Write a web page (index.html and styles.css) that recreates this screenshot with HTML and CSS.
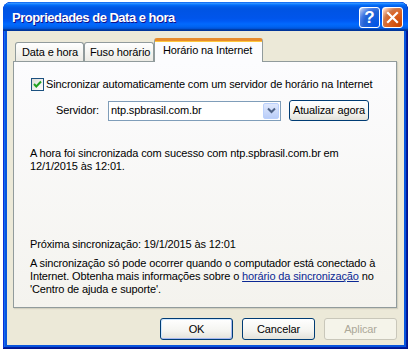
FILE: index.html
```html
<!DOCTYPE html>
<html lang="pt-BR">
<head>
<meta charset="utf-8">
<title>Propriedades de Data e hora</title>
<link rel="stylesheet" href="styles.css">
</head>
<body>
<div class="window">
  <div class="titlebar">
    <span class="title">Propriedades de Data e hora</span>
    <div class="controls">
      <span class="ctl help">?</span>
      <span class="ctl close">
        <svg width="13" height="13" viewBox="0 0 13 13"><path d="M2 2 L11 11 M11 2 L2 11" stroke="#fff" stroke-width="2.2" stroke-linecap="square"/></svg>
      </span>
    </div>
  </div>
  <div class="frame">
    <div class="tabs">
      <span class="tab t1">Data e hora</span>
      <span class="tab t2">Fuso horário</span>
      <span class="tab active">Horário na Internet</span>
    </div>
    <div class="panel">
      <div class="check-row">
        <span class="checkbox">
          <svg width="11" height="11" viewBox="0 0 11 11"><path d="M2 5 L4.3 7.5 L9 2.5" fill="none" stroke="#21a121" stroke-width="2"/></svg>
        </span>
        <span>Sincronizar automaticamente com um servidor de horário na Internet</span>
      </div>
      <div class="server-row">
        <span class="label">Servidor:</span>
        <div class="combo">
          <span class="combo-text">ntp.spbrasil.com.br</span>
          <span class="drop">
            <svg width="9" height="7" viewBox="0 0 9 7"><path d="M1 1.5 L4.5 5 L8 1.5" fill="none" stroke="#4d6185" stroke-width="2"/></svg>
          </span>
        </div>
        <span class="btn update">Atualizar agora</span>
      </div>
      <p class="msg">A hora foi sincronizada com sucesso com ntp.spbrasil.com.br em<br>12/1/2015 às 12:01.</p>
      <p class="next">Próxima sincronização: 19/1/2015 às 12:01</p>
      <p class="note">A sincronização só pode ocorrer quando o computador está conectado à<br>Internet. Obtenha mais informações sobre o <span class="link">horário da sincronização</span> no<br>'Centro de ajuda e suporte'.</p>
    </div>
    <div class="buttons">
      <span class="btn dlg default">OK</span>
      <span class="btn dlg">Cancelar</span>
      <span class="btn dlg disabled">Aplicar</span>
    </div>
  </div>
</div>
</body>
</html>
```
FILE: styles.css
```css
html, body {
  margin: 0;
  padding: 0;
  background: #ffffff;
}
body {
  width: 408px;
  height: 352px;
  overflow: hidden;
  font-family: "Liberation Sans", Arial, sans-serif;
  font-size: 11px;
  letter-spacing: -0.13px;
  color: #000;
}
.window {
  margin: 2px 0 0 3px;
  width: 405px;
  height: 347px;
  border-radius: 8px 8px 0 0;
  background: #0855dd;
  box-shadow: inset -1px -1px #00138c, inset 1px 1px #0831d9, inset -2px -2px #001ea0, inset 2px 2px #166aee;
  display: flex;
  flex-direction: column;
  overflow: hidden;
}
.titlebar {
  height: 29px;
  flex: none;
  display: flex;
  align-items: center;
  justify-content: space-between;
  padding: 0 5px 0 9px;
  border-radius: 8px 8px 0 0;
  background: linear-gradient(180deg, #0058ee 0%, #3593ff 4%, #288eff 6%, #127dff 8%, #036ffc 10%, #0262ee 14%, #0057e5 20%, #0054e3 24%, #0055eb 56%, #005bf5 66%, #026afe 76%, #0062ef 86%, #0052d6 92%, #0040ab 94%, #003092 100%);
}
.title {
  color: #fff;
  font-weight: bold;
  font-size: 13px;
  letter-spacing: -0.5px;
  text-shadow: 1px 1px #0f1089;
  margin-top: 1px;
}
.controls {
  display: flex;
  gap: 2px;
  margin-top: 2px;
}
.ctl {
  width: 19px;
  height: 19px;
  border: 1px solid #fff;
  border-radius: 3px;
  display: flex;
  align-items: center;
  justify-content: center;
  color: #fff;
  letter-spacing: 0;
}
.help {
  font-weight: bold;
  font-size: 17px;
  background: radial-gradient(circle at 90% 90%, #0054e9 0%, #2263d5 55%, #4479e4 70%, #a3bbec 90%, #fff 100%);
}
.close {
  background: radial-gradient(circle at 90% 90%, #cc4600 0%, #dc6527 55%, #cd7546 68%, #ffccb2 90%, #fff 100%);
}
.frame {
  flex: 1;
  margin: 0 4px 4px 4px;
  background: #ece9d8;
  padding: 7px 7px 0 6px;
  display: flex;
  flex-direction: column;
}
.tabs {
  height: 23px;
  display: flex;
  align-items: flex-end;
  padding-left: 2px;
  position: relative;
  z-index: 1;
}
.tab {
  box-sizing: border-box;
  height: 19px;
  border: 1px solid #919b9c;
  border-bottom: none;
  border-radius: 3px 3px 0 0;
  background: linear-gradient(180deg, #fff 0%, #f7f7f4 40%, #ecebe5 100%);
  line-height: 18px;
  padding-left: 6px;
  white-space: nowrap;
}
.t1 { width: 69px; }
.t2 { width: 70px; padding-left: 5px; }
.tab.active {
  width: 109px;
  height: 24px;
  margin-bottom: -1px;
  background: #fcfcfe;
  border-top: 3px solid #e68b2c;
  box-shadow: inset 0 1px #ffc73c;
  border-radius: 3px 3px 0 0;
  line-height: 18px;
  padding-left: 8px;
}
.panel {
  box-sizing: border-box;
  height: 247px;
  border: 1px solid #919b9c;
  background: linear-gradient(180deg, #fcfcfe, #f4f3ee);
  box-shadow: 1px 1px 1px 0 rgba(208, 206, 191, 0.9);
  padding: 16px 0 0 16px;
  line-height: 13px;
}
.check-row {
  display: flex;
  align-items: center;
  gap: 2px;
  margin-left: 1px;
  height: 13px;
}
.checkbox {
  box-sizing: border-box;
  width: 13px;
  height: 13px;
  border: 1px solid #1c5180;
  background: linear-gradient(135deg, #dcdcd7, #fff);
  display: flex;
  align-items: center;
  justify-content: center;
}
.server-row {
  display: flex;
  align-items: center;
  margin-top: 9px;
  height: 21px;
}
.label {
  width: 52px;
  margin-left: 26px;
}
.combo {
  box-sizing: border-box;
  width: 173px;
  height: 20px;
  border: 1px solid #7f9db9;
  background: #fff;
  display: flex;
  align-items: center;
  justify-content: space-between;
  padding: 0 1px 0 1px;
}
.combo-text {
  padding-left: 1px;
}
.drop {
  box-sizing: border-box;
  width: 16px;
  height: 16px;
  border: 1px solid #bad0fc;
  border-radius: 2px;
  background: linear-gradient(180deg, #dfe8fd, #b9cdf8);
  display: flex;
  align-items: center;
  justify-content: center;
}
.btn {
  box-sizing: border-box;
  border: 1px solid #003c74;
  border-radius: 3px;
  background: linear-gradient(180deg, #fff 0%, #f4f4f0 60%, #e3e2da 100%);
  display: flex;
  align-items: center;
  justify-content: center;
  white-space: nowrap;
}
.update {
  width: 80px;
  height: 21px;
  margin-left: 8px;
}
p {
  margin: 0;
}
.msg {
  margin-top: 26px;
}
.next {
  margin-top: 65px;
}
.note {
  margin-top: 6px;
}
.link {
  color: #0b2894;
  text-decoration: underline;
}
.buttons {
  display: flex;
  justify-content: flex-end;
  gap: 9px;
  margin-top: 10px;
}
.dlg {
  width: 73px;
  height: 22px;
}
.default {
  box-shadow: inset -1px -1px #a6b8f0, inset 1px 1px #cee7ff;
}
.disabled {
  border-color: #c9c7ba;
  color: #aca899;
  background: #f5f4ea;
}
```
